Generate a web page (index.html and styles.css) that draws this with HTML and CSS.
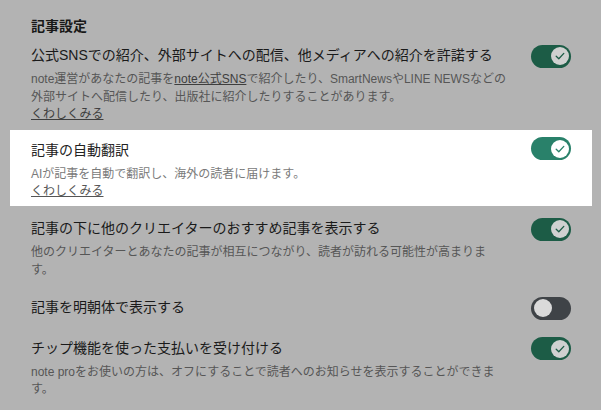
FILE: index.html
```html
<!DOCTYPE html>
<html lang="ja">
<head>
<meta charset="utf-8">
<title>記事設定</title>
<link rel="stylesheet" href="styles.css">
</head>
<body>
<main class="settings">
  <h2 class="section-title">記事設定</h2>
  <div class="rows">
    <div class="row dim">
      <div class="text">
        <p class="title">公式SNSでの紹介、外部サイトへの配信、他メディアへの紹介を許諾する</p>
        <p class="desc"><span>note運営があなたの記事を</span><a class="inline-link" href="#">note公式SNS</a><span>で紹介したり、SmartNewsやLINE NEWSなどの</span><span>外部サイトへ配信したり、出版社に紹介したりすることがあります。</span></p>
        <a class="more" href="#">くわしくみる</a>
      </div>
      <span class="toggle on"><span class="knob"><svg viewBox="0 0 18 18" class="check"><path d="M5.2 9.3 L7.8 11.8 L12.8 6.4"/></svg></span></span>
    </div>
    <div class="row focus">
      <div class="text">
        <p class="title">記事の自動翻訳</p>
        <p class="desc">AIが記事を自動で翻訳し、海外の読者に届けます。</p>
        <a class="more" href="#">くわしくみる</a>
      </div>
      <span class="toggle on"><span class="knob"><svg viewBox="0 0 18 18" class="check"><path d="M5.2 9.3 L7.8 11.8 L12.8 6.4"/></svg></span></span>
    </div>
    <div class="row dim">
      <div class="text">
        <p class="title">記事の下に他のクリエイターのおすすめ記事を表示する</p>
        <p class="desc">他のクリエイターとあなたの記事が相互につながり、読者が訪れる可能性が高まります。</p>
      </div>
      <span class="toggle on"><span class="knob"><svg viewBox="0 0 18 18" class="check"><path d="M5.2 9.3 L7.8 11.8 L12.8 6.4"/></svg></span></span>
    </div>
    <div class="row dim">
      <div class="text">
        <p class="title">記事を明朝体で表示する</p>
      </div>
      <span class="toggle off"><span class="knob"></span></span>
    </div>
    <div class="row dim">
      <div class="text">
        <p class="title">チップ機能を使った支払いを受け付ける</p>
        <p class="desc">note proをお使いの方は、オフにすることで読者へのお知らせを表示することができます。</p>
      </div>
      <span class="toggle on"><span class="knob"><svg viewBox="0 0 18 18" class="check"><path d="M5.2 9.3 L7.8 11.8 L12.8 6.4"/></svg></span></span>
    </div>
  </div>
</main>
</body>
</html>
```

FILE: styles.css
```css
html, body {
  margin: 0;
  padding: 0;
  background: #b3b3b3;
  font-family: "Liberation Sans", "Noto Sans CJK JP", sans-serif;
  color: #1a1a1a;
}

.settings {
  padding: 16px 9px 0 10px;
}

.section-title {
  margin: 0;
  padding: 0 21px;
  font-size: 14px;
  line-height: 21px;
  font-weight: bold;
  color: #181818;
}

.rows {
  display: flex;
  flex-direction: column;
  gap: 2px;
}

.row {
  display: flex;
  align-items: flex-start;
  gap: 25px;
  padding: 8px 21px;
}

.text {
  flex: 1;
  min-width: 0;
}

.title {
  margin: 0;
  font-size: 14px;
  line-height: 21px;
}

.desc {
  margin: 5px 0 0;
  font-size: 12px;
  line-height: 17.5px;
}

.more {
  display: block;
  font-size: 12px;
  line-height: 17.5px;
  text-decoration: underline;
  width: max-content;
}

.inline-link {
  text-decoration: underline;
}

/* dimmed rows (under the tour overlay) */
.dim .title { color: #1a1a1a; }
.dim .desc { color: #565656; }
.dim .inline-link,
.dim .more { color: #3e3e3e; }

/* highlighted row (tour spotlight) */
.focus {
  background: #ffffff;
  padding: 10px 21px 5px;
  margin: -4px 0 2.5px;
}
.focus .title { color: #222222; }
.focus .desc { color: #7a7a7a; }
.focus .more { color: #555555; }
.focus .toggle { margin-top: -2.5px; }

/* toggles */
.toggle {
  flex: none;
  position: relative;
  width: 40px;
  height: 23px;
  margin-top: -0.5px;
  border-radius: 12px;
}

.knob {
  position: absolute;
  top: 2.5px;
  width: 18px;
  height: 18px;
  border-radius: 50%;
  display: flex;
  align-items: center;
  justify-content: center;
}

.toggle.on .knob { right: 2.5px; }
.toggle.off .knob { left: 2.5px; }

.check {
  width: 18px;
  height: 18px;
  fill: none;
  stroke-width: 1.3;
  stroke-linecap: round;
  stroke-linejoin: round;
}

.dim .toggle.on { background: #1c5c46; }
.dim .toggle.on .knob { background: #cfd1d0; }
.dim .toggle.on .check { stroke: #1c5c46; }
.dim .toggle.off { background: #3f4347; }
.dim .toggle.off .knob { background: #dadada; }

.focus .toggle.on { background: #29816a; }
.focus .toggle.on .knob { background: #ffffff; }
.focus .toggle.on .check { stroke: #29816a; }
```
